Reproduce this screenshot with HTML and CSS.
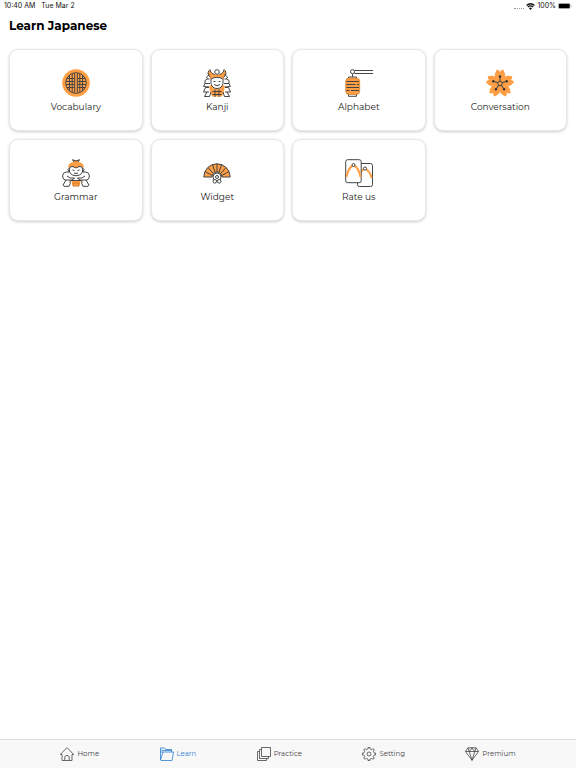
FILE: index.html
```
<!DOCTYPE html>
<html lang="en">
<head>
<meta charset="utf-8">
<meta name="viewport" content="width=device-width, initial-scale=1">
<title>Learn Japanese</title>
<link rel="stylesheet" href="styles.css">
</head>
<body>
<div class="status">
  <span>10:40 AM</span><span>Tue Mar 2</span>
  <div class="status-right">
    <span class="signal"></span>
    <svg class="wifi" viewBox="0 0 16 12" aria-hidden="true"><path d="M1 4.2Q8-2 15 4.2M3.3 6.8q4.700-4 9.400 0" fill="none" stroke="#111" stroke-width="2.200"/><path d="M5.300 9Q8 6.800 10.700 9L8 12z" fill="#111"/></svg>
    <span>100%</span>
    <svg class="battery" viewBox="0 0 28 12" aria-hidden="true"><rect x=".5" y=".5" width="24" height="11" rx="3" fill="#fff" stroke="#999"/><rect x="1.500" y="1.500" width="22" height="9" rx="2"/><path d="M26 4v4q2-2 0-4" fill="#999"/></svg>
  </div>
</div>
<main>
  <h1>Learn Japanese</h1>
  <div class="grid">
    <button class="card" type="button">
      <svg class="icon" viewBox="0 0 28 28" aria-hidden="true"><circle class="gold" cx="14" cy="14" r="13.800"/><circle cx="14" cy="14" r="10.300"/><path d="M7.500 6v16M10.200 5v18M17.800 5v18M20.500 6v16M5 9.500h7.500M15.500 9.500H23M4 12.500h8.500M15.500 12.500H24M4 15.500h8.500M15.500 15.500H24M5 18.500h7.500M15.500 18.500H23"/><path class="gold" d="M12.700 4h2.600v20h-2.600z"/><path d="M12.700 4v20M15.300 4v20"/></svg>
      <span>Vocabulary</span>
    </button>
    <button class="card" type="button">
      <svg class="icon" viewBox="0 0 28 28" aria-hidden="true"><path class="gold" d="M7 0q0 4 4.500 5.300h5Q21 4 21 0q4.500 4.500-.5 8.500l1 2q-7.500-5-15 0l1-2Q2.500 4.500 7 0zM6 17l3-1 2.500 4h5L19 16l3 1-1 5-2 5.500H9L7 22z"/><path d="M7 .3Q7 4 11.500 5.500M21 .3Q21 4 16.500 5.500M7.500 8.500Q3.500 5 6 1.500M20.500 8.500q4-3.500 1.500-7M8 10q6-3.500 12 0v4.500q-1 5-6 5t-6-5zM10.500 12.500h2M15.500 12.500h2M11 15.500q3 2.500 6 0"/><path d="M6.500 5.500L3.500 8l1 2L2 11.500v3L.6 17.500 6 18M4.500 10h2M2 14.500h5M21.500 5.500l3 2.500-1 2 2.500 1.500v3l1.400 3L22 18M23.500 10h-2M26 14.500h-5M6 18.500H2.500l-2 4.500H6M4 23l-2.500 4.500H6.500L8 23M22 18.500h3.500l2 4.500H22M24 23l2.500 4.500h-5L20 23"/><path d="M9.500 22.500h9M9.500 25.500h9M12 20.500V28M16 20.500V28"/><circle cx="14" cy="3" r="2.300" fill="#fff"/></svg>
      <span>Kanji</span>
    </button>
    <button class="card" type="button">
      <svg class="icon" viewBox="0 0 28 28" aria-hidden="true"><path d="M9.500 1.500H28M9.500 4.500H28M7.500 5v3M3.500 10V8h8v2M3.500 25v2.300h8V25"/><circle cx="7.500" cy="2.700" r="2"/><rect x=".7" y="9" width="14" height="16.500" rx="3.500" fill="#ff9f45" stroke="#d97720" stroke-width=".7"/><path d="M1.500 12.500h12.500M1.500 15.500h9M12 15.500h2M1.500 18.500h12.500M1.500 21.500h3M6 21.500h8"/></svg>
      <span>Alphabet</span>
    </button>
    <button class="card" type="button">
      <svg class="icon" viewBox="0 0 28 28" aria-hidden="true"><defs><path id="petal" d="M14 15C7.500 11 8 4.500 11 .6l2 .9 1 1.500 1-1.500 2-.9c3 3.900 3.500 10.400-3 14.400z"/><path id="stamen" d="M14 12.300V8"/></defs><g class="gold"><use href="#petal"/><use href="#petal" transform="rotate(72 14 14.500)"/><use href="#petal" transform="rotate(144 14 14.500)"/><use href="#petal" transform="rotate(216 14 14.500)"/><use href="#petal" transform="rotate(288 14 14.500)"/><circle cx="14" cy="14.500" r="6"/></g><circle cx="14" cy="14.500" r="2.200"/><use href="#stamen"/><use href="#stamen" transform="rotate(72 14 14.500)"/><use href="#stamen" transform="rotate(144 14 14.500)"/><use href="#stamen" transform="rotate(216 14 14.500)"/><use href="#stamen" transform="rotate(288 14 14.500)"/><g class="tips"><circle cx="14" cy="7.500" r="1.200"/><circle cx="20.700" cy="12.300" r="1.200"/><circle cx="18.100" cy="20.200" r="1.200"/><circle cx="9.900" cy="20.200" r="1.200"/><circle cx="7.300" cy="12.300" r="1.200"/></g></svg>
      <span>Conversation</span>
    </button>
    <button class="card" type="button">
      <svg class="icon" viewBox="0 0 28 28" aria-hidden="true"><path class="gold" d="M6 8.500Q6 3.500 12 3L10 .8l4 .7 4-.7L16 3q6 .5 6 5.500l-3-1-5 1.500-5-1.500zM9 21.500h10l-2 5.500h-6z"/><path d="M12 3l-1.500-2.300L14 2l3.500-1.300L16 3M8 8q-2 6 2.500 8 3.500 1.500 7 0Q22 14 20 8l-3-.5-3 1.500-3-1.500zM7.500 9q-3 1-.5 4M20.500 9q3 1 .5 4M10.500 11l2 .500M17.500 11l-2 .500M12 14q2 1 4 0M7 13Q.5 12.500.7 17q0 4.500 4.300 4 5 1 8-2M21 13q6.500-.5 6.300 4 0 4.500-4.300 4-5 1-8-2M5 17q3 3 7 2M23 17q-3 3-7 2M4 21l-3 5 1 1.300h5q2-2 1-6M24 21l3 5-1 1.300h-5q-2-2-1-6M8.500 21.500h11"/><path d="M11 24h6v3h-6z" fill="#ff9f45" stroke="#d97720"/></svg>
      <span>Grammar</span>
    </button>
    <button class="card" type="button">
      <svg class="icon" viewBox="0 0 28 28" aria-hidden="true"><path class="gold" d="M.8 18a13.200 13.200 0 0 1 26.400 0H19a5 5 0 0 0-10 0z"/><path d="M.8 18a13.200 13.200 0 0 1 26.400 0H19a5 5 0 0 0-10 0zM9.200 16.500L2 12.500M10.200 14.500L5 8.500M12 13.300L9.500 5.500M14 13V4.800M16 13.300l2.500-7.800M17.800 14.500L23 8.500M18.800 16.500l7.200-4"/><circle cx="14" cy="18" r="4" fill="#fff"/><circle cx="14" cy="18" r="1.500"/><circle cx="11.800" cy="22.300" r="1.800" fill="#fff"/><circle cx="16.200" cy="22.300" r="1.800" fill="#fff"/></svg>
      <span>Widget</span>
    </button>
    <button class="card" type="button">
      <svg class="icon" viewBox="0 0 28 28" aria-hidden="true"><rect x="12.500" y="4.500" width="15" height="23" rx="2" fill="#fff"/><path class="strap" d="M13.500 18Q15 12 20 9.500 25 12 26.700 19"/><circle cx="20" cy="9.500" r="1.500" fill="#fff"/><rect x=".7" y=".7" width="15.500" height="23" rx="2" fill="#fff"/><path class="strap" d="M1.500 18Q3 9 8.500 6 14 9 15.500 18"/><circle cx="8.500" cy="6" r="1.500" fill="#fff"/></svg>
      <span>Rate us</span>
    </button>
  </div>
</main>
<nav class="tabs">
  <a href="#home"><svg viewBox="0 0 14 14" aria-hidden="true"><path d="M.3 7.500L7 .6l6.700 6.900H12v6H9.200V9.500Q7 7 4.800 9.500v4H2v-6zM4.800 13.500h4.400"/></svg>Home</a>
  <a class="active" href="#learn" aria-current="page"><svg viewBox="0 0 14 14" aria-hidden="true"><path d="M.5 13V1h4l1 1.500h6V5M.5 13L3 5h10.500L12 13.500H1zM2 6V2.500M2.500 3.500h9"/></svg>Learn</a>
  <a href="#practice"><svg viewBox="0 0 14 14" aria-hidden="true"><path d="M4.500.5h9v9h-9zM4.500 2.500h-2v9h9v-2M2.500 4.500h-2v9h9v-2"/></svg>Practice</a>
  <a href="#setting"><svg viewBox="0 0 14 14" aria-hidden="true"><defs><path id="tooth" d="M5.200 2.200L6 2V.4h2V2l.8.2"/></defs><use href="#tooth"/><use href="#tooth" transform="rotate(45 7 7)"/><use href="#tooth" transform="rotate(90 7 7)"/><use href="#tooth" transform="rotate(135 7 7)"/><use href="#tooth" transform="rotate(180 7 7)"/><use href="#tooth" transform="rotate(225 7 7)"/><use href="#tooth" transform="rotate(270 7 7)"/><use href="#tooth" transform="rotate(315 7 7)"/><circle cx="7" cy="7" r="2"/></svg>Setting</a>
  <a href="#premium"><svg viewBox="0 0 14 14" aria-hidden="true"><path d="M3 .8h8l2.500 3.700L7 13.300.5 4.500zM.5 4.500h13M3 .8l1.300 3.700L7 .8l2.700 3.700L11 .8M4.300 4.500L7 13.300l2.700-8.800"/></svg>Premium</a>
</nav>
</body>
</html>
```
FILE: styles.css
```
* { box-sizing: border-box; }

body {
  margin: 0;
  min-height: 100vh;
  display: flex;
  flex-direction: column;
  background: #fff;
  color: #222;
  font-family: Montserrat, Inter, sans-serif;
}

.status {
  display: flex;
  align-items: center;
  gap: 6px;
  height: 12px;
  padding: 0 4px;
  font: 400 7px/12px Inter, sans-serif;
  color: #111;
}

.status-right {
  display: flex;
  align-items: center;
  gap: 2px;
  margin-left: auto;
}

.signal { width: 10px; margin-top: 4px; border-top: 1px dotted #999; }
.wifi { width: 9px; height: 7px; }
.battery { width: 14px; height: 6px; }

main { flex: 1; padding: 6px 9px; }

h1 {
  margin: 0 0 15px;
  font-size: 12px;
  line-height: 16px;
  font-weight: 700;
  color: #000;
}

.grid {
  display: grid;
  grid-template-columns: repeat(4, 1fr);
  gap: 8px;
}

.card {
  display: flex;
  flex-direction: column;
  align-items: center;
  gap: 4px;
  height: 82px;
  padding: 19px 0 0;
  border: 1px solid #e8e8e8;
  border-radius: 9px;
  background: #fff;
  box-shadow: 0 1px 3px rgba(0, 0, 0, .2);
  color: #222;
  font: 400 9px/12px Montserrat, Inter, sans-serif;
}

.icon {
  width: 28px;
  height: 28px;
  fill: none;
  stroke: #444;
  stroke-width: 1;
  stroke-linejoin: round;
}

.gold { fill: #ff9f45; stroke: none; }
.strap { stroke: #ff9f45; stroke-width: 2; }
.tips { fill: #333; stroke: none; }

.tabs {
  display: flex;
  justify-content: space-evenly;
  height: 29px;
  border-top: 1px solid #ddd;
  background: #f8f8f8;
}

.tabs a {
  display: flex;
  align-items: center;
  gap: 3px;
  color: #444;
  font-size: 7px;
  line-height: 12px;
  text-decoration: none;
}

.tabs svg {
  width: 14px;
  height: 14px;
  fill: none;
  stroke: currentColor;
  stroke-width: .8;
}

.tabs .active { color: #2b7fd4; }
```
